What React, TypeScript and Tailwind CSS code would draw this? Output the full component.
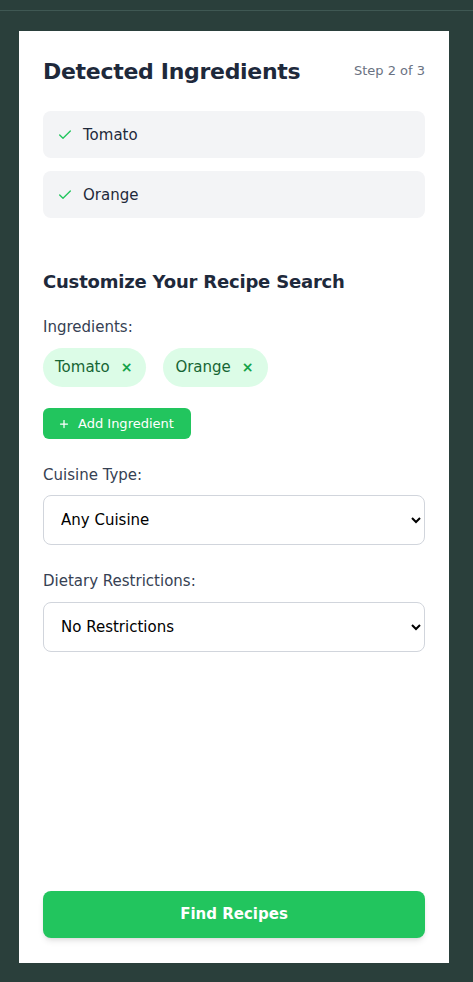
import { Check, Plus } from 'lucide-react';

const detected = ['Tomato', 'Orange'];

export default function App() {
  return (
    <div
      className="min-h-[982px] bg-[#2a3f3b] pt-[10px] pb-[19px]"
      style={{ fontFamily: '"DejaVu Sans", "Open Sans", sans-serif' }}
    >
      <div className="h-px bg-[#3f5853]" />
      <div className="ml-[19px] w-[430px] mt-[20px] bg-white px-6 pt-[24px] pb-[25px] flex flex-col min-h-[932px]">
        {/* header */}
        <div className="flex items-center justify-between h-[32px]">
          <h1 className="text-[22px] font-bold text-[#1e293b] tracking-[-0.3px]">Detected Ingredients</h1>
          <span className="text-[13px] text-gray-500">Step 2 of 3</span>
        </div>

        {/* detected list */}
        <div className="mt-[24px] flex flex-col gap-[13px]">
          {detected.map((item) => (
            <div key={item} className="h-[47px] rounded-lg bg-gray-100 flex items-center px-[14px] gap-[10px] pt-px">
              <Check className="w-4 h-4 text-[#22c55e]" strokeWidth={2} />
              <span className="text-[15px] text-[#1e293b]">{item}</span>
            </div>
          ))}
        </div>

        {/* customize */}
        <h2 className="mt-[51px] text-[18px] font-bold text-[#1e293b] leading-[26px] tracking-[-0.2px]">Customize Your Recipe Search</h2>

        <label className="mt-[21px] text-[15px] text-gray-700 leading-[22px]">Ingredients:</label>
        <div className="mt-[10px] flex gap-[17px]">
          {detected.map((item) => (
            <span key={item} className="h-[39px] rounded-full bg-[#dcfce7] text-[#166534] flex items-center pl-3 pr-[14px] gap-[11px] text-[15px]">
              {item}
              <span className="text-[#16a34a] text-[14px] font-semibold">×</span>
            </span>
          ))}
        </div>

        <button className="mt-[21px] self-start h-[31px] rounded-md bg-[#22c55e] text-white text-[13px] flex items-center gap-[8px] pl-[15px] pr-[17px]">
          <Plus className="w-3 h-3" strokeWidth={2.5} />
          Add Ingredient
        </button>

        <label className="mt-[25px] text-[15px] text-gray-700 leading-[22px]">Cuisine Type:</label>
        <select className="mt-[9px] h-[50px] w-full rounded-lg border border-gray-300 bg-white pl-[13px] pr-3 text-[15px] text-black">
          <option>Any Cuisine</option>
          <option>Italian</option>
          <option>Mexican</option>
        </select>

        <label className="mt-[25px] text-[15px] text-gray-700 leading-[22px]">Dietary Restrictions:</label>
        <select className="mt-[10px] h-[50px] w-full rounded-lg border border-gray-300 bg-white pl-[13px] pr-3 text-[15px] text-black">
          <option>No Restrictions</option>
          <option>Vegetarian</option>
          <option>Vegan</option>
        </select>

        <button className="mt-auto h-[47px] w-full rounded-lg bg-[#22c55e] text-white font-bold text-[15px] shadow-md">
          Find Recipes
        </button>
      </div>
    </div>
  );
}
